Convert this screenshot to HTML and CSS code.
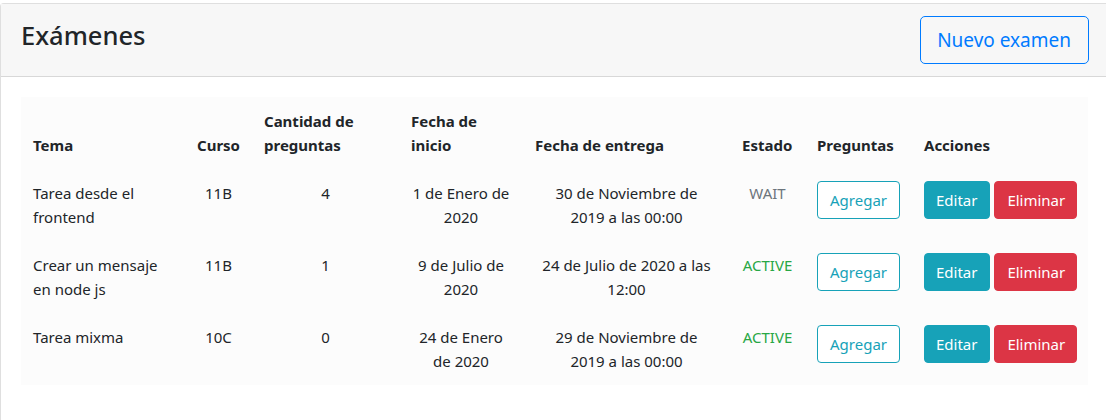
FILE: index.html
```html
<!DOCTYPE html>
<html lang="es">
<head>
<meta charset="utf-8">
<title>Exámenes</title>
<link rel="stylesheet" href="styles.css">
</head>
<body>
<div class="card">
  <div class="card-header">
    <h3 class="title">Exámenes</h3>
    <button class="btn btn-lg btn-outline-primary">Nuevo examen</button>
  </div>
  <div class="card-body">
    <table class="table">
      <thead>
        <tr>
          <th class="c-tema">Tema</th>
          <th class="c-curso">Curso</th>
          <th class="c-cant">Cantidad de preguntas</th>
          <th class="c-ini">Fecha de inicio</th>
          <th class="c-ent">Fecha de entrega</th>
          <th class="c-est">Estado</th>
          <th class="c-preg">Preguntas</th>
          <th class="c-acc">Acciones</th>
        </tr>
      </thead>
      <tbody>
        <tr>
          <td>Tarea desde el frontend</td>
          <td class="center">11B</td>
          <td class="center">4</td>
          <td class="center">1 de Enero de 2020</td>
          <td class="center entrega">30 de Noviembre de 2019 a las 00:00</td>
          <td class="center st-wait">WAIT</td>
          <td><button class="btn btn-outline-info">Agregar</button></td>
          <td class="actions"><button class="btn btn-info">Editar</button> <button class="btn btn-danger">Eliminar</button></td>
        </tr>
        <tr>
          <td>Crear un mensaje en node js</td>
          <td class="center">11B</td>
          <td class="center">1</td>
          <td class="center">9 de Julio de 2020</td>
          <td class="center entrega">24 de Julio de 2020 a las 12:00</td>
          <td class="center st-active">ACTIVE</td>
          <td><button class="btn btn-outline-info">Agregar</button></td>
          <td class="actions"><button class="btn btn-info">Editar</button> <button class="btn btn-danger">Eliminar</button></td>
        </tr>
        <tr>
          <td>Tarea mixma</td>
          <td class="center">10C</td>
          <td class="center">0</td>
          <td class="center">24 de Enero de 2020</td>
          <td class="center entrega">29 de Noviembre de 2019 a las 00:00</td>
          <td class="center st-active">ACTIVE</td>
          <td><button class="btn btn-outline-info">Agregar</button></td>
          <td class="actions"><button class="btn btn-info">Editar</button> <button class="btn btn-danger">Eliminar</button></td>
        </tr>
      </tbody>
    </table>
  </div>
</div>
</body>
</html>
```
FILE: styles.css
```css
html, body {
  margin: 0;
  padding: 0;
  overflow: hidden;
  background: #fff;
}
body {
  padding-top: 3px;
  font-family: "Noto Sans", "Segoe UI", "Liberation Sans", sans-serif;
  font-size: 15px;
  line-height: 24px;
  color: #212529;
}
.card {
  width: 1109px;
  box-sizing: border-box;
  border: 1px solid rgba(0,0,0,.125);
  border-radius: 4px 0 0 0;
  background: #fff;
  min-height: 430px;
}
.card-header {
  display: flex;
  justify-content: space-between;
  align-items: flex-start;
  padding: 12px 19px 12px 20px;
  background: #f7f7f7;
  border-bottom: 1px solid rgba(0,0,0,.125);
}
.title {
  margin: 0;
  font-size: 25.5px;
  font-weight: 500;
  line-height: 1.2;
  padding-top: 4px;
  color: #212529;
}
.card-body {
  padding: 20px;
}
.btn {
  display: inline-block;
  font-family: inherit;
  font-size: 15px;
  line-height: 24px;
  padding: 6px 12px;
  border: 1px solid transparent;
  border-radius: 4px;
  background: transparent;
  cursor: pointer;
  vertical-align: top;
}
.btn-lg {
  font-size: 19px;
  line-height: 30px;
  padding: 8px 17px 8px 16px;
  border-radius: 5px;
}
.btn-outline-primary {
  color: #007bff;
  border-color: #007bff;
  background: transparent;
}
.btn-outline-info {
  color: #17a2b8;
  border-color: #17a2b8;
  background: #fff;
}
.btn-info {
  color: #fff;
  background: #17a2b8;
  border-color: #17a2b8;
}
.btn-danger {
  color: #fff;
  background: #dc3545;
  border-color: #dc3545;
}
.table {
  width: 1067px;
  table-layout: fixed;
  border-collapse: collapse;
  background: #fcfcfc;
  margin-bottom: 16px;
}
.table th,
.table td {
  box-sizing: border-box;
  padding: 12px;
  vertical-align: top;
  text-align: left;
}
.table th {
  vertical-align: bottom;
  font-weight: 700;
}
.c-tema { width: 164px; }
.c-curso { width: 67px; }
.c-cant { width: 147px; }
.c-ini { width: 124px; }
.c-ent { width: 207px; }
.c-est { width: 75px; }
.c-preg { width: 107px; }
.c-acc { width: 176px; }
.table td.center { text-align: center; }
.table td.entrega { padding-left: 17px; padding-right: 17px; }
.table td.actions { white-space: nowrap; }
.actions .btn-info { padding: 6px 12px 6px 11px; }
.actions .btn-danger { padding: 6px 11px 6px 12px; }
.st-wait { color: #6c757d; }
.st-active { color: #28a745; }
```
